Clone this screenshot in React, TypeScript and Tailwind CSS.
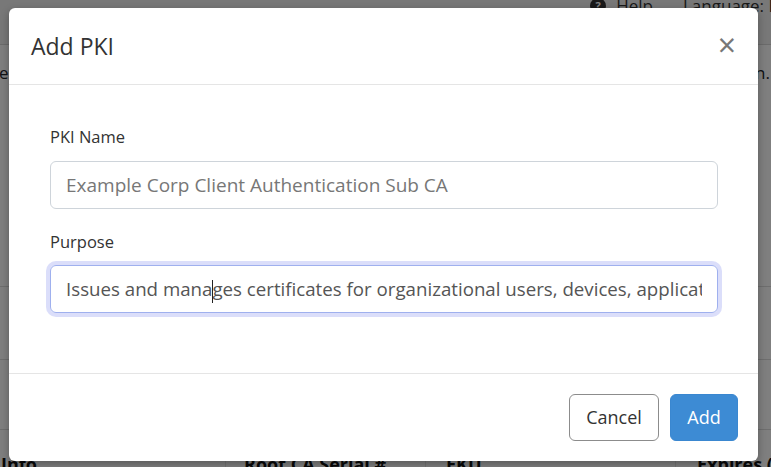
import React from "react";

export default function App() {
    return (
        <div className="relative h-[467px] w-full overflow-hidden bg-white text-[#212529] [font-family:'Open_Sans','Noto_Sans',sans-serif]">
            {/* page behind the dialog */}
            <div className="flex h-[45px] items-start justify-end border-b border-[#d6d6d6] bg-[#f1f1f1] text-[17px] text-[#333]">
                <div className="-mt-[7px] flex items-center gap-[10px]">
                    <span className="flex h-[16px] w-[16px] items-center justify-center rounded-full bg-[#333] text-[11px] font-bold text-white">?</span>
                    <span>Help</span>
                </div>
                <div className="-mt-[7px] ml-[30px] w-[88px] overflow-hidden whitespace-nowrap">Language: English</div>
            </div>
            <div className="mt-[16px] flex justify-between text-[17px] leading-[24px]">
                <span className="-ml-[1px]">e</span>
                <span className="pr-[1px]">n.</span>
            </div>
            <div className="mt-[201px] border-b border-[#dcdcdc]"></div>
            <div className="mt-[72px] border-b border-[#dcdcdc]"></div>
            <div className="mt-[69px] grid grid-cols-[225px_200px_250px_1fr] border-t border-[#dcdcdc] pt-[21px] text-[18px] font-bold text-[#111]">
                <div className="pl-[1px]">Info</div>
                <div className="border-l border-[#e6e6e6] pl-[18px]">Root CA Serial #</div>
                <div className="border-l border-[#e6e6e6] pl-[20px]">EKU</div>
                <div className="border-l border-[#e6e6e6] pl-[21px] whitespace-nowrap">Expires (UTC)</div>
            </div>

            {/* backdrop + dialog */}
            <div className="absolute inset-0 bg-black/50">
                <div className="ml-[9px] mt-[8px] w-[749px] rounded-[6px] bg-white shadow-[0_3px_9px_rgba(0,0,0,0.3)]">
                    <div className="flex h-[77px] items-center justify-between border-b border-[#e5e5e5] pl-[22px] pr-[22px]">
                        <h5 className="text-[23px] leading-none text-[#333]">Add PKI</h5>
                        <button className="-mt-[2px] text-[32px] leading-none text-[#777]">×</button>
                    </div>
                    <div className="h-[288px] pl-[41px] pr-[40px] pt-[40px]">
                        <label className="block text-[16.5px] leading-[24px] text-[#333]">PKI Name</label>
                        <input
                            className="mt-[12px] block h-[48px] w-full rounded-[6px] border border-[#ced4da] px-[15px] text-[19px] text-[#495057] outline-none placeholder:text-[#777]"
                            placeholder="Example Corp Client Authentication Sub CA"
                        />
                        <label className="mt-[21px] block text-[16.5px] leading-[24px] text-[#333]">Purpose</label>
                        {/* focused field, text scrolled to the start with the caret inside "manages" */}
                        <div className="mt-[11px] h-[48px] w-full rounded-[6px] border border-[#9fb0ee] px-[15px] text-[18.7px] text-[#555] shadow-[0_0_0_4px_rgba(110,125,235,0.25)]">
                            <div className="overflow-hidden whitespace-nowrap leading-[46px]">
                                Issues and mana
                                <span className="relative -mx-[0.5px] inline-block h-[23px] w-[1px] bg-[#222] align-middle"></span>
                                ges certificates for organizational users, devices, applications and services
                            </div>
                        </div>
                    </div>
                    <div className="flex h-[88px] items-center justify-end gap-[11px] border-t border-[#e5e5e5] pr-[20px]">
                        <button className="h-[47px] w-[90px] rounded-[6px] border border-[#8c8c8c] bg-white text-[18px] text-[#333]">Cancel</button>
                        <button className="h-[47px] w-[68px] rounded-[6px] border border-[#3a87d0] bg-[#3d8bd4] text-[18px] text-white">Add</button>
                    </div>
                </div>
            </div>
        </div>
    );
}
